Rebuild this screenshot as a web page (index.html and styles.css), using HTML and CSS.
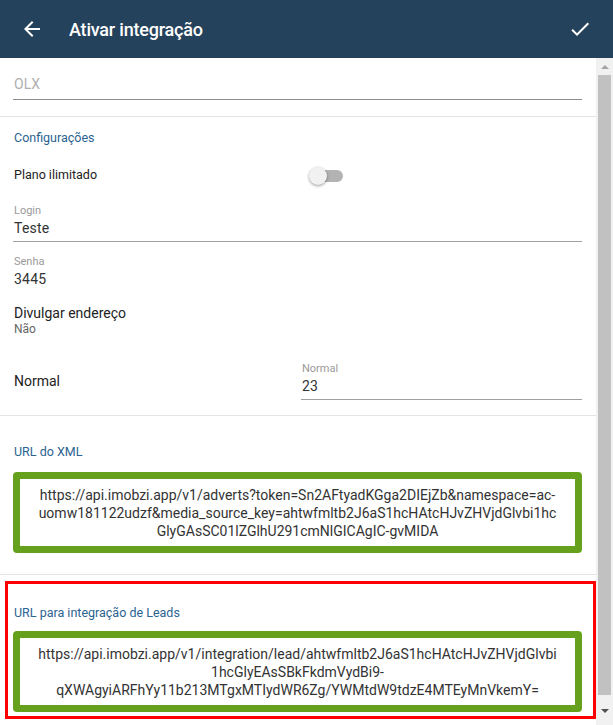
FILE: index.html
```html
<!DOCTYPE html>
<html lang="pt-BR">
<head>
    <meta charset="UTF-8">
    <meta name="viewport" content="width=device-width, initial-scale=1.0">
    <title>Ativar integração</title>
    <link rel="stylesheet" href="styles.css">
</head>
<body>
    <header class="toolbar">
        <svg class="toolbar-icon" width="24" height="24" viewBox="0 0 24 24">
            <path d="M20 11H7.83l5.59-5.59L12 4l-8 8 8 8 1.41-1.41L7.83 13H20v-2z" fill="#fff"/>
        </svg>
        <h1>Ativar integração</h1>
        <svg class="toolbar-icon check" width="24" height="24" viewBox="0 0 24 24">
            <path d="M9 16.17L4.83 12l-1.42 1.41L9 19 21 7l-1.41-1.41z" fill="#fff"/>
        </svg>
    </header>

    <div class="page">
        <main class="content">
            <section class="section top">
                <div class="field placeholder">OLX</div>
            </section>

            <section class="section config">
                <h2 class="section-title">Configurações</h2>

                <div class="split toggle-row">
                    <span class="text">Plano ilimitado</span>
                    <div class="toggle-cell">
                        <span class="toggle"><span class="toggle-thumb"></span></span>
                    </div>
                </div>

                <div class="input underline login">
                    <label>Login</label>
                    <div class="value">Teste</div>
                </div>

                <div class="input senha">
                    <label>Senha</label>
                    <div class="value">3445</div>
                </div>

                <div class="info">
                    <div class="text">Divulgar endereço</div>
                    <div class="sub">Não</div>
                </div>

                <div class="split normal-row">
                    <span class="text">Normal</span>
                    <div class="input underline">
                        <label>Normal</label>
                        <div class="value">23</div>
                    </div>
                </div>
            </section>

            <section class="section url">
                <h2 class="section-title">URL do XML</h2>
                <div class="url-box">
                    https://api.imobzi.app/v1/adverts?token=Sn2AFtyadKGga2DIEjZb&amp;namespace=ac-<br>
                    uomw181122udzf&amp;media_source_key=ahtwfmltb2J6aS1hcHAtcHJvZHVjdGlvbi1hc<br>
                    GlyGAsSC01lZGlhU291cmNlGICAgIC-gvMIDA
                </div>
            </section>

            <section class="highlight">
                <h2 class="section-title">URL para integração de Leads</h2>
                <div class="url-box">
                    https://api.imobzi.app/v1/integration/lead/ahtwfmltb2J6aS1hcHAtcHJvZHVjdGlvbi<br>
                    1hcGlyEAsSBkFkdmVydBi9-<br>
                    qXWAgyiARFhYy11b213MTgxMTIydWR6Zg/YWMtdW9tdzE4MTEyMnVkemY=
                </div>
            </section>
        </main>

        <div class="scrollbar">
            <span class="arrow up"></span>
            <span class="thumb"></span>
            <span class="arrow down"></span>
        </div>
    </div>
</body>
</html>
```

FILE: styles.css
```css
* {
    margin: 0;
    padding: 0;
    box-sizing: border-box;
    font-family: Roboto, "Liberation Sans", sans-serif;
}

body {
    width: 613px;
    height: 725px;
    overflow: hidden;
    background: #fff;
    color: #333;
}

/* toolbar */
.toolbar {
    height: 58px;
    background: #25425c;
    display: flex;
    align-items: center;
    padding: 0 21px 0 20px;
}

.toolbar-icon {
    display: block;
    flex-shrink: 0;
}

.toolbar h1 {
    flex-grow: 1;
    margin-left: 25px;
    color: #fff;
    font-size: 18px;
    font-weight: 500;
    letter-spacing: -0.2px;
}

/* page body */
.page {
    display: flex;
    height: 667px;
}

.content {
    width: 596px;
    overflow: hidden;
}

.section {
    padding: 0 14px 0 13px;
    border-bottom: 1px solid #e4e4e4;
}

.section.top {
    padding-top: 16px;
    padding-bottom: 16px;
}

.field {
    font-size: 14px;
    line-height: 20px;
    padding: 0 1px 5px;
    border-bottom: 1px solid #8c8c8c;
}

.placeholder {
    color: #b0b0b0;
}

.section-title {
    font-size: 12.5px;
    line-height: 16px;
    font-weight: 400;
    color: #2b6391;
    padding-left: 1px;
}

.config {
    padding-top: 13px;
    padding-bottom: 15px;
}

.text {
    font-size: 14px;
    line-height: 18px;
    color: #222;
    padding-left: 1px;
}

.toggle-row .text {
    font-size: 12.5px;
}

.split {
    display: grid;
    grid-template-columns: 288px 1fr;
    align-items: center;
}

.toggle-row {
    margin-top: 19px;
    height: 20px;
}

.toggle-cell {
    padding-left: 8px;
}

.toggle {
    display: block;
    position: relative;
    width: 32px;
    height: 12px;
    margin: 1px 0 0 2px;
    border-radius: 6px;
    background: #b3b3b3;
}

.toggle-thumb {
    position: absolute;
    left: -2px;
    top: -3px;
    width: 18px;
    height: 18px;
    border-radius: 50%;
    background: #f1f1f1;
    box-shadow: 0 1px 3px rgba(0, 0, 0, 0.4);
}

.input label {
    display: block;
    font-size: 11px;
    line-height: 13px;
    color: #9a9a9a;
    padding-left: 1px;
}

.input .value {
    margin-top: 2px;
    font-size: 14px;
    line-height: 18px;
    color: #333;
    padding-left: 1px;
    letter-spacing: 0.2px;
}

.input.underline {
    padding-bottom: 4px;
    border-bottom: 1px solid #a0a0a0;
}

.login {
    margin-top: 19px;
}

.senha {
    margin-top: 13px;
}

.info {
    margin-top: 16px;
}

.info .sub {
    font-size: 12px;
    line-height: 14px;
    color: #666;
    padding-left: 1px;
}

.normal-row {
    margin-top: 26px;
}

/* url boxes */
.url {
    padding-top: 28px;
    padding-bottom: 21px;
    padding-right: 14px;
}

.url-box {
    margin-top: 12px;
    border: 7px solid #65a11c;
    border-radius: 4px;
    padding: 7px 8px 6px;
    text-align: center;
    font-size: 14px;
    line-height: 18px;
    color: #333;
}

.highlight {
    margin: 6px 0 0 5px;
    border: 3px solid #ff0000;
    padding: 21px 11px 4px 5px;
}

.highlight .url-box {
    margin-top: 10px;
}

/* scrollbar */
.scrollbar {
    width: 17px;
    background: #f1f1f1;
    display: flex;
    flex-direction: column;
    align-items: center;
    padding-top: 7px;
}

.arrow {
    width: 0;
    height: 0;
    border-left: 4px solid transparent;
    border-right: 4px solid transparent;
}

.arrow.up {
    border-bottom: 4px solid #a3a3a3;
}

.arrow.down {
    margin-top: 14px;
    border-top: 4px solid #505050;
}

.thumb {
    margin-top: 6px;
    width: 13px;
    height: 620px;
    background: #c1c1c1;
}
```
